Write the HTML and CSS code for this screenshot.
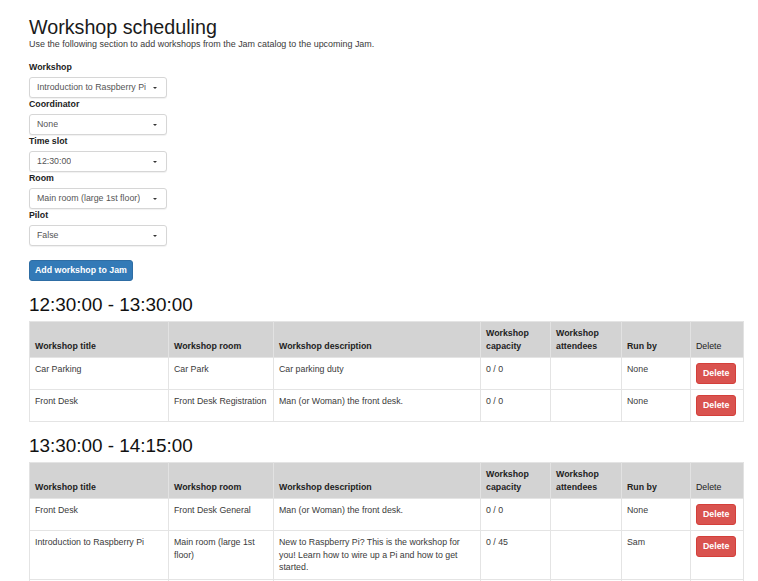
FILE: index.html
```html
<!DOCTYPE html>
<html>
<head>
<meta charset="utf-8">
<title>Workshop scheduling</title>
<link rel="stylesheet" href="styles.css">
</head>
<body>
<div class="page">
  <h1 class="title">Workshop scheduling</h1>
  <p class="intro">Use the following section to add workshops from the Jam catalog to the upcoming Jam.</p>

  <div class="form-group">
    <label class="field-label">Workshop</label>
    <div class="select"><span class="select-text">Introduction to Raspberry Pi</span><span class="caret"></span></div>
  </div>
  <div class="form-group">
    <label class="field-label">Coordinator</label>
    <div class="select"><span class="select-text">None</span><span class="caret"></span></div>
  </div>
  <div class="form-group">
    <label class="field-label">Time slot</label>
    <div class="select"><span class="select-text">12:30:00</span><span class="caret"></span></div>
  </div>
  <div class="form-group">
    <label class="field-label">Room</label>
    <div class="select"><span class="select-text">Main room (large 1st floor)</span><span class="caret"></span></div>
  </div>
  <div class="form-group">
    <label class="field-label">Pilot</label>
    <div class="select"><span class="select-text">False</span><span class="caret"></span></div>
  </div>

  <button class="btn btn-primary">Add workshop to Jam</button>

  <h2 class="slot-title">12:30:00 - 13:30:00</h2>
  <table class="slot-table">
    <colgroup>
      <col class="c-title"><col class="c-room"><col class="c-desc"><col class="c-cap"><col class="c-att"><col class="c-run"><col class="c-del">
    </colgroup>
    <thead>
      <tr><th>Workshop title</th><th>Workshop room</th><th>Workshop description</th><th>Workshop capacity</th><th>Workshop attendees</th><th>Run by</th><th class="th-plain">Delete</th></tr>
    </thead>
    <tbody>
      <tr><td>Car Parking</td><td>Car Park</td><td>Car parking duty</td><td>0 / 0</td><td></td><td>None</td><td><button class="btn btn-danger">Delete</button></td></tr>
      <tr><td>Front Desk</td><td>Front Desk Registration</td><td>Man (or Woman) the front desk.</td><td>0 / 0</td><td></td><td>None</td><td><button class="btn btn-danger">Delete</button></td></tr>
    </tbody>
  </table>

  <h2 class="slot-title">13:30:00 - 14:15:00</h2>
  <table class="slot-table">
    <colgroup>
      <col class="c-title"><col class="c-room"><col class="c-desc"><col class="c-cap"><col class="c-att"><col class="c-run"><col class="c-del">
    </colgroup>
    <thead>
      <tr><th>Workshop title</th><th>Workshop room</th><th>Workshop description</th><th>Workshop capacity</th><th>Workshop attendees</th><th>Run by</th><th class="th-plain">Delete</th></tr>
    </thead>
    <tbody>
      <tr><td>Front Desk</td><td>Front Desk General</td><td>Man (or Woman) the front desk.</td><td>0 / 0</td><td></td><td>None</td><td><button class="btn btn-danger">Delete</button></td></tr>
      <tr><td>Introduction to Raspberry Pi</td><td>Main room (large 1st floor)</td><td>New to Raspberry Pi? This is the workshop for you! Learn how to wire up a Pi and how to get started.</td><td>0 / 45</td><td></td><td>Sam</td><td><button class="btn btn-danger">Delete</button></td></tr>
      <tr class="row-more"><td></td><td></td><td></td><td></td><td></td><td></td><td></td></tr>
    </tbody>
  </table>
</div>
</body>
</html>
```

FILE: styles.css
```css
html, body {
  margin: 0;
  padding: 0;
  background: #ffffff;
}

body {
  font-family: "Liberation Sans", Arial, Helvetica, sans-serif;
  font-size: 8.8px;
  line-height: 13px;
  color: #333333;
}

.page {
  padding: 17px 15px 20px 29px;
}

.title {
  margin: 0;
  font-size: 19.7px;
  line-height: 21px;
  font-weight: normal;
  color: #1a1a1a;
}

.intro {
  margin: 0 0 10px;
  font-size: 8.95px;
  color: #3a3a3a;
}

.form-group {
  display: flex;
  flex-direction: column;
  align-items: flex-start;
}

.field-label {
  display: block;
  font-weight: bold;
  color: #222222;
  margin-bottom: 3px;
}

.select {
  box-sizing: border-box;
  width: 138px;
  height: 21px;
  border: 1px solid #d6d6d6;
  border-radius: 3px;
  background: #ffffff;
  box-shadow: 0 1px 1px rgba(0, 0, 0, 0.06);
  display: flex;
  align-items: center;
  justify-content: space-between;
  padding: 0 9px 0 7px;
  color: #555555;
}

.select-text {
  white-space: nowrap;
  overflow: hidden;
}

.caret {
  width: 0;
  height: 0;
  border-left: 2px solid transparent;
  border-right: 2px solid transparent;
  border-top: 2.5px solid #333333;
  flex: none;
  margin-left: 4px;
}

.btn {
  font-family: inherit;
  font-size: 8.8px;
  line-height: 13px;
  font-weight: bold;
  color: #ffffff;
  border-radius: 3px;
  cursor: pointer;
  box-sizing: border-box;
}

.btn-primary {
  margin-top: 14px;
  height: 21px;
  padding: 0 5px;
  background: #337ab7;
  border: 1px solid #2e6da4;
  display: block;
}

.btn-danger {
  height: 21px;
  padding: 0 6px;
  background: #d9534f;
  border: 1px solid #d43f3a;
  display: block;
}

.slot-title {
  margin: 13px 0 6px;
  font-size: 18.9px;
  line-height: 21px;
  font-weight: normal;
  color: #111111;
}

.slot-table {
  width: 714px;
  table-layout: fixed;
  border-collapse: collapse;
  border: 1px solid #e4e4e4;
}

.c-title { width: 139px; }
.c-room { width: 105px; }
.c-desc { width: 207px; }
.c-cap { width: 70px; }
.c-att { width: 71px; }
.c-run { width: 69px; }
.c-del { width: 53px; }

.slot-table th {
  background: #d3d3d3;
  text-align: left;
  vertical-align: bottom;
  padding: 5px 5px 4px;
  font-weight: bold;
  color: #222222;
  border: 1px solid #e2e2e2;
  border-top: none;
  border-bottom: none;
  height: 26px;
}

.slot-table th.th-plain {
  font-weight: normal;
}

.slot-table td {
  vertical-align: top;
  padding: 5px;
  line-height: 12.5px;
  border: 1px solid #e4e4e4;
  color: #3a3a3a;
}

.slot-table .row-more td {
  height: 31px;
}
```
